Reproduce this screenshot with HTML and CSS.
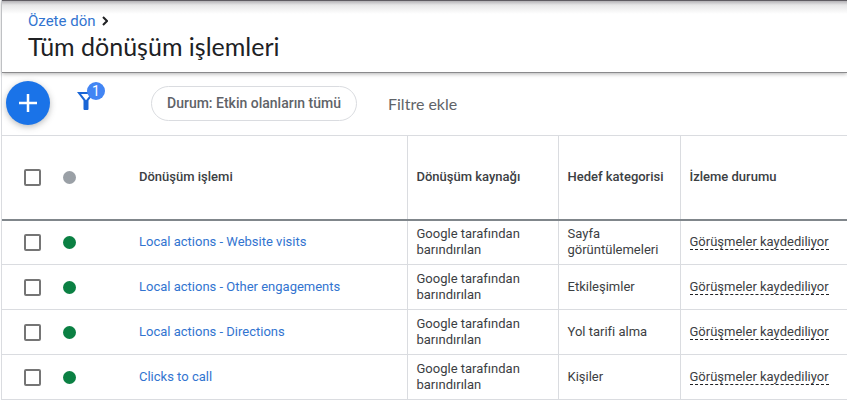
FILE: index.html
```
<!DOCTYPE html>
<html lang="tr">
  <head>
    <meta charset="UTF-8" />
    <meta name="viewport" content="width=device-width, initial-scale=1.0" />
    <title>Tüm dönüşüm işlemleri</title>
    <link rel="stylesheet" href="styles.css">
  </head>
  <body>
    <div class="page">
      <header class="header">
        <nav class="breadcrumb">
          <a href="#">Özete dön</a>
          <svg width="6" height="10" viewBox="0 0 6 10">
            <path d="M1 1l4 4-4 4" fill="none" stroke="#202124" stroke-width="2" />
          </svg>
        </nav>
        <h1>Tüm dönüşüm işlemleri</h1>
      </header>

      <div class="toolbar">
        <button type="button" class="add" aria-label="Ekle">
          <svg width="20" height="20" viewBox="0 0 20 20">
            <path d="M10 1v18M1 10h18" stroke="#fff" stroke-width="2.500" />
          </svg>
        </button>
        <button type="button" class="filter" aria-label="Filtre">
          <svg width="18" height="18" viewBox="0 0 18 18">
            <path
              d="M0 0h18l-6.500 8.500V17q0 1-1 1h-3q-1 0-1-1V8.500zM4 2l5 6.200L14 2z"
              fill="#1a66d6"
              fill-rule="evenodd"
            />
          </svg>
          <span class="badge">1</span>
        </button>
        <button type="button" class="chip">Durum: Etkin olanların tümü</button>
        <button type="button" class="add-filter">Filtre ekle</button>
      </div>

      <table>
        <colgroup>
          <col class="col-check" />
          <col class="col-status" />
          <col class="col-name" />
          <col class="col-source" />
          <col class="col-category" />
          <col />
        </colgroup>
        <thead>
          <tr>
            <th><input type="checkbox" aria-label="Tümünü seç" /></th>
            <th><span class="dot"></span></th>
            <th>Dönüşüm işlemi</th>
            <th class="line">Dönüşüm kaynağı</th>
            <th class="line">Hedef kategorisi</th>
            <th class="line">İzleme durumu</th>
          </tr>
        </thead>
        <tbody>
          <tr>
            <td><input type="checkbox" aria-label="Local actions - Website visits" /></td>
            <td><span class="dot active"></span></td>
            <td><a href="#">Local actions - Website visits</a></td>
            <td class="line">Google tarafından barındırılan</td>
            <td class="line">Sayfa görüntülemeleri</td>
            <td class="line"><span class="tracking">Görüşmeler kaydediliyor</span></td>
          </tr>
          <tr>
            <td><input type="checkbox" aria-label="Local actions - Other engagements" /></td>
            <td><span class="dot active"></span></td>
            <td><a href="#">Local actions - Other engagements</a></td>
            <td class="line">Google tarafından barındırılan</td>
            <td class="line">Etkileşimler</td>
            <td class="line"><span class="tracking">Görüşmeler kaydediliyor</span></td>
          </tr>
          <tr>
            <td><input type="checkbox" aria-label="Local actions - Directions" /></td>
            <td><span class="dot active"></span></td>
            <td><a href="#">Local actions - Directions</a></td>
            <td class="line">Google tarafından barındırılan</td>
            <td class="line">Yol tarifi alma</td>
            <td class="line"><span class="tracking">Görüşmeler kaydediliyor</span></td>
          </tr>
          <tr>
            <td><input type="checkbox" aria-label="Clicks to call" /></td>
            <td><span class="dot active"></span></td>
            <td><a href="#">Clicks to call</a></td>
            <td class="line">Google tarafından barındırılan</td>
            <td class="line">Kişiler</td>
            <td class="line"><span class="tracking">Görüşmeler kaydediliyor</span></td>
          </tr>
        </tbody>
      </table>
    </div>
  </body>
</html>
```
FILE: styles.css
```
* {
  box-sizing: border-box;
}
body {
  margin: 0;
  background: #fff;
  color: #3c4043;
  font-family: Roboto, Arial, sans-serif;
  font-size: 13px;
  line-height: 16px;
}
a {
  color: #3274d0;
  text-decoration: none;
}
button {
  padding: 0;
  border: none;
  background: none;
  font-family: inherit;
  cursor: pointer;
}
svg {
  display: block;
}
.page {
  border-left: 1px solid #dadce0;
  margin-left: 1px;
}
.header {
  padding: 11px 26px;
  border-top: 1px solid #5f5c62;
  border-bottom: 1px solid #8a8a8c;
  background: linear-gradient(#b4b2b6, #e6e6e7 4px, #fff 13px);
  box-shadow: 0 1px 4px rgba(0, 0, 0, 0.3);
}
.breadcrumb {
  display: flex;
  align-items: center;
  gap: 7px;
  font-size: 15px;
  line-height: 18px;
}
h1 {
  margin: 1px 0 0;
  color: #202124;
  font-family: Lato, sans-serif;
  font-size: 25px;
  font-weight: 400;
  line-height: 30px;
}
.toolbar {
  display: flex;
  align-items: center;
  height: 62px;
  padding: 0 4px 2px;
}
.add {
  display: flex;
  align-items: center;
  justify-content: center;
  width: 44px;
  height: 44px;
  border-radius: 50%;
  background: #1a73e8;
  box-shadow: 0 2px 6px rgba(60, 64, 67, 0.35);
}
.filter {
  position: relative;
  margin: 0 0 4px 27px;
}
.badge {
  position: absolute;
  top: -10px;
  left: 10px;
  width: 18px;
  height: 18px;
  border-radius: 50%;
  background: #4285f4;
  color: #fff;
  font-size: 14px;
  line-height: 18px;
}
.chip {
  height: 35px;
  margin-left: 56px;
  padding: 0 15px;
  border: 1px solid #dadce0;
  border-radius: 18px;
  color: #5f6368;
  font-size: 14px;
  font-weight: 500;
}
.add-filter {
  margin-left: 31px;
  color: #5f6368;
  font-family: Lato, sans-serif;
  font-size: 16px;
}
table {
  width: 100%;
  border-collapse: collapse;
  table-layout: fixed;
}
.col-check {
  width: 61px;
}
.col-status {
  width: 67px;
}
.col-name {
  width: 277px;
}
.col-source {
  width: 151px;
}
.col-category {
  width: 122px;
}
th,
td {
  height: 45px;
  padding: 0 9px;
  border-bottom: 1px solid #dadce0;
  text-align: left;
  vertical-align: middle;
}
th {
  height: 84px;
  border-top: 1px solid #dadce0;
  border-bottom: 2px solid #80868b;
  font-weight: 500;
}
.line {
  border-left: 1px solid #dadce0;
}
th:first-child,
td:first-child {
  padding: 0 0 0 22px;
}
th:nth-child(2),
td:nth-child(2) {
  padding: 0;
}
input[type="checkbox"] {
  display: block;
  appearance: none;
  width: 17px;
  height: 17px;
  margin: 0;
  border: 2px solid #757575;
  border-radius: 2px;
}
.dot {
  display: block;
  width: 13px;
  height: 13px;
  border-radius: 50%;
  background: #9aa0a6;
}
.dot.active {
  background: #0b8043;
}
.tracking {
  border-bottom: 1px dashed #202124;
}
```
